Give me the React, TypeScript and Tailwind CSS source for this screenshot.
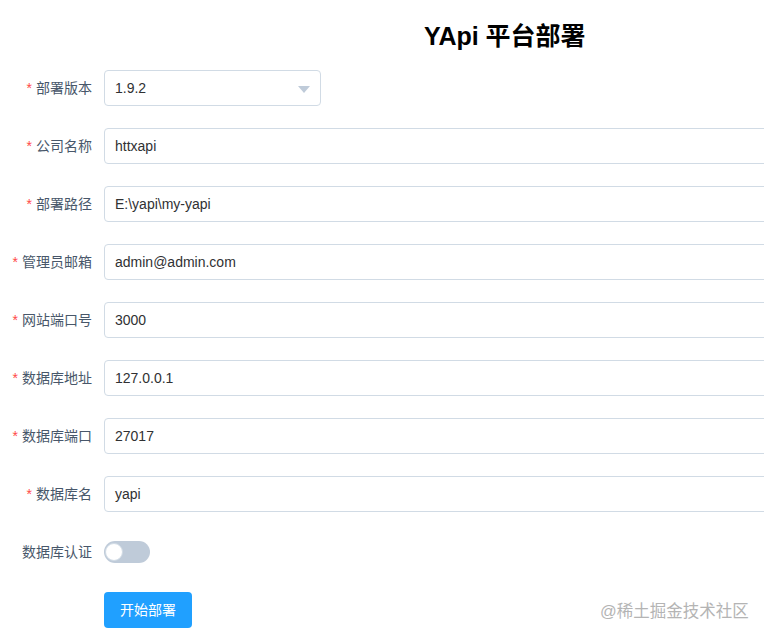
import React from "react";

const fields = [
  { label: "公司名称", value: "httxapi" },
  { label: "部署路径", value: "E:\\yapi\\my-yapi" },
  { label: "管理员邮箱", value: "admin@admin.com" },
  { label: "网站端口号", value: "3000" },
  { label: "数据库地址", value: "127.0.0.1" },
  { label: "数据库端口", value: "27017" },
  { label: "数据库名", value: "yapi" },
];

const FormLabel = ({ text, required = true }: { text: string; required?: boolean }) => (
  <label className="w-[104px] shrink-0 pr-3 text-right text-sm text-[#48576a] leading-9">
    {required && <span className="mr-1 text-[#ff4949]">*</span>}
    {text}
  </label>
);

export default function App() {
  return (
    <div
      className="relative h-[638px] w-[764px] overflow-hidden bg-white"
      style={{ fontFamily: '"Liberation Sans", "Noto Sans CJK SC", sans-serif' }}
    >
      <h1 className="pt-[20px] pl-[424px] text-[25px] font-bold leading-8 text-black">YApi 平台部署</h1>

      <form className="mt-[18px] flex flex-col gap-[22px]">
        <div className="flex items-center">
          <FormLabel text="部署版本" />
          <div className="relative flex h-9 w-[217px] items-center rounded border border-[#d1dbe5] px-[10px] text-sm text-[#303133]">
            1.9.2
            <svg className="absolute right-[10px] top-[15px]" width="12" height="7" viewBox="0 0 12 7">
              <path d="M0 0h12L6 7z" fill="#bfcbd9" />
            </svg>
          </div>
        </div>

        {fields.map((f) => (
          <div key={f.label} className="flex items-center">
            <FormLabel text={f.label} />
            <div className="flex h-9 w-[700px] shrink-0 items-center rounded border border-[#d1dbe5] px-[10px] text-sm text-[#303133]">
              {f.value}
            </div>
          </div>
        ))}

        <div className="flex items-center">
          <FormLabel text="数据库认证" required={false} />
          <div className="relative h-[22px] w-[46px] rounded-full bg-[#bfcbd9]">
            <span className="absolute left-[1px] top-[2px] h-[18px] w-[18px] rounded-full border border-[#d1dbe5] bg-white" />
          </div>
        </div>

        <div className="flex items-center pl-[104px]">
          <button type="button" className="h-9 w-[88px] rounded bg-[#20a0ff] text-sm text-white">
            开始部署
          </button>
        </div>
      </form>

      <div className="absolute left-[600px] top-[599px] text-[16.5px] text-[#b4b4b4]">@稀土掘金技术社区</div>
    </div>
  );
}
